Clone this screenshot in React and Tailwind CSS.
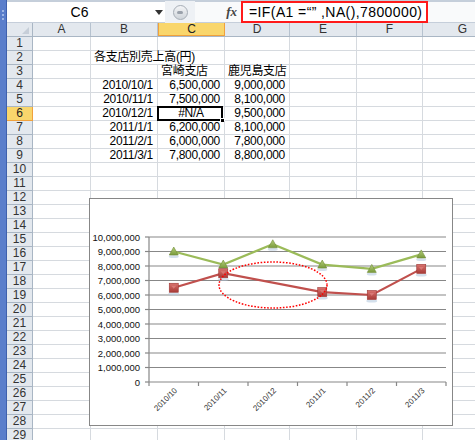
import React from 'react'

const FONT = { fontFamily: '"Liberation Sans", "Noto Sans CJK JP", sans-serif' }

const COLS = [
  { k: 'A', w: 'w-[58px]' },
  { k: 'B', w: 'w-[67px]' },
  { k: 'C', w: 'w-[67px]' },
  { k: 'D', w: 'w-[65px]' },
  { k: 'E', w: 'w-[67px]' },
  { k: 'F', w: 'w-[66px]' },
  { k: 'G', w: 'w-[80px]' },
]

// 表のデータ（行番号 -> 列 -> 値）
const CELLS = {
  2: { B: { v: '各支店別売上高(円)', align: 'left', spill: true } },
  3: { C: { v: '宮崎支店', align: 'left' }, D: { v: '鹿児島支店', align: 'left' } },
  4: { B: { v: '2010/10/1' }, C: { v: '6,500,000' }, D: { v: '9,000,000' } },
  5: { B: { v: '2010/11/1' }, C: { v: '7,500,000' }, D: { v: '8,100,000' } },
  6: { B: { v: '2010/12/1' }, C: { v: '#N/A', align: 'center', active: true }, D: { v: '9,500,000' } },
  7: { B: { v: '2011/1/1' }, C: { v: '6,200,000' }, D: { v: '8,100,000' } },
  8: { B: { v: '2011/2/1' }, C: { v: '6,000,000' }, D: { v: '7,800,000' } },
  9: { B: { v: '2011/3/1' }, C: { v: '7,800,000' }, D: { v: '8,800,000' } },
}

const ROWS = Array.from({ length: 29 }, (_, i) => i + 1)

export default function App() {
  return (
    <div className="relative w-[475px] h-[440px] overflow-hidden bg-white flex" style={FONT}>
      {/* 左端の青い帯 */}
      <div className="w-[7px] shrink-0 bg-[#5a7ecb] border-r border-[#3e60ad] flex flex-col items-center pt-[10px] gap-[2px]">
        <span className="w-[2px] h-[2px] bg-[#9fb7e6]" />
        <span className="w-[2px] h-[2px] bg-[#9fb7e6]" />
        <span className="w-[2px] h-[2px] bg-[#9fb7e6]" />
      </div>

      <div className="flex-1 flex flex-col min-w-0">
        {/* 上端のツールバーの縁 */}
        <div className="h-[6px] bg-[#e2e8ef] border-b border-[#c5cfdb] flex">
          <div className="w-[87px] border-r border-[#b9c4d2]" />
          <div className="w-[278px] border-r border-[#b9c4d2]" />
          <div className="w-[90px] border-r border-[#b9c4d2]" />
        </div>

        {/* 数式バー */}
        <FormulaBar />
        <div className="h-[3px] bg-[#dfe5ec]" />

        {/* 列見出し */}
        <div className="flex h-[14px] bg-[#e3e8ee] border-b border-[#a9b6c4]">
          <div className="w-[26px] shrink-0 border-r border-[#a9b6c4] relative">
            <span className="absolute right-[3px] bottom-[2px] w-0 h-0 border-l-[7px] border-l-transparent border-b-[7px] border-b-[#c6ced8]" />
          </div>
          {COLS.map((c) => (
            <div
              key={c.k}
              className={`${c.w} shrink-0 border-r text-center text-[12px] leading-[13px] ${
                c.k === 'C'
                  ? 'bg-[#f9d66c] border-[#f0a13c] border-l border-b text-[#222]'
                  : 'border-[#b6c2cf] text-[#333]'
              }`}
            >
              {c.k}
            </div>
          ))}
        </div>

        {/* セル */}
        {ROWS.map((r) => (
          <div key={r} className="flex h-[14px] shrink-0">
            <div
              className={`w-[26px] shrink-0 border-r border-b text-center text-[12px] leading-[13px] ${
                r === 6
                  ? 'bg-[#f9d66c] border-[#f0a13c] text-[#222]'
                  : 'bg-[#e3e8ee] border-[#a9b6c4] text-[#333]'
              }`}
            >
              {r}
            </div>
            {COLS.map((c) => {
              const cell = CELLS[r] && CELLS[r][c.k]
              return <Cell key={c.k} w={c.w} cell={cell} />
            })}
          </div>
        ))}
      </div>

      <Chart />
    </div>
  )
}

function FormulaBar() {
  return (
    <div className="h-[22px] flex items-stretch bg-[#eef1f5]">
      <div className="w-[158px] flex items-center bg-white border-y border-[#c5ceda]">
        <div className="w-[145px] text-center text-[14px] leading-none">C6</div>
        <div className="w-0 h-0 border-x-[4px] border-x-transparent border-t-[5px] border-t-[#333] ml-[3px]" />
      </div>
      <div className="w-[30px] flex items-center justify-center">
        <div className="w-[15px] h-[15px] rounded-full bg-gradient-to-b from-[#f4f5f7] to-[#cfd4da] border border-[#a6adb6] flex items-center justify-center">
          <span className="w-[6px] h-[3px] rounded-sm bg-[#9aa1ab]" />
        </div>
      </div>
      <div className="flex-1 flex items-center bg-[#f9fafb] border-y border-[#c5ceda]">
        <span
          className="w-[46px] text-right pr-[4px] text-[13px] italic font-bold text-[#444]"
          style={{ fontFamily: '"Liberation Serif", serif' }}
        >
          fx
        </span>
        <div className="w-[187px] h-[22px] border-2 border-[#ff1a1a] bg-white flex items-center pl-[6px] text-[14px] leading-none whitespace-nowrap tracking-[0.4px]">
          =IF(A1 =&ldquo;&rdquo; ,NA(),7800000)
        </div>
      </div>
    </div>
  )
}

function Cell({ w, cell }) {
  if (!cell) {
    return <div className={`${w} shrink-0 border-r border-b border-[#d6dadf]`} />
  }
  const align =
    cell.align === 'left'
      ? 'justify-start pl-[3px]'
      : cell.align === 'center'
      ? 'justify-center'
      : 'justify-end pr-[4px]'
  return (
    <div
      className={`${w} shrink-0 relative flex items-center border-b border-[#d6dadf] whitespace-nowrap text-[12px] leading-[13px] text-black ${align} ${
        cell.spill ? 'overflow-visible z-[1]' : 'border-r'
      }`}
    >
      <span className="tracking-[-0.3px]">{cell.v}</span>
      {cell.active && (
        <>
          <div className="absolute left-[-1px] top-[-1px] right-[1px] bottom-[-1px] border-2 border-black" />
          <div className="absolute right-[-1px] bottom-[-3px] w-[5px] h-[5px] bg-black border border-white" />
        </>
      )}
    </div>
  )
}

// グラフ（セルの上に浮かぶ）
const X0 = 149
const X1 = 446
const Y0 = 382
const STEP = 14.5
const CAT = (X1 - X0) / 6
const cx = (i) => X0 + CAT * (i + 0.5)
const cy = (v) => Y0 - v * STEP

const CATS = ['2010/10', '2010/11', '2010/12', '2011/1', '2011/2', '2011/3']
const MIYAZAKI = [6.5, 7.5, null, 6.2, 6.0, 7.8]
const KAGOSHIMA = [9.0, 8.1, 9.5, 8.1, 7.8, 8.8]
const YLABELS = ['0', '1,000,000', '2,000,000', '3,000,000', '4,000,000', '5,000,000', '6,000,000', '7,000,000', '8,000,000', '9,000,000', '10,000,000']

function Chart() {
  const red = MIYAZAKI.map((v, i) => (v == null ? null : [cx(i), cy(v)])).filter(Boolean)
  const green = KAGOSHIMA.map((v, i) => [cx(i), cy(v)])
  return (
    <div className="absolute left-[89px] top-[198px] w-[364px] h-[228px] bg-white border border-[#878787] z-[2]">
      <svg width="362" height="226" viewBox="90 199 362 226" className="block">
        <defs>
          <linearGradient id="gTri" x1="0" y1="0" x2="0" y2="1">
            <stop offset="0" stopColor="#b4cf7a" />
            <stop offset="1" stopColor="#7a9a3c" />
          </linearGradient>
          <linearGradient id="gSq" x1="0" y1="0" x2="0" y2="1">
            <stop offset="0" stopColor="#d9736f" />
            <stop offset="1" stopColor="#a83a36" />
          </linearGradient>
        </defs>

        {/* 目盛線 */}
        {YLABELS.map((t, i) => (
          <g key={t}>
            {i > 0 && <line x1={X0} x2={X1} y1={cy(i)} y2={cy(i)} stroke="#878787" strokeWidth="1.2" />}
            <line x1={X0 - 4} x2={X0} y1={cy(i)} y2={cy(i)} stroke="#878787" strokeWidth="1.2" />
            <text
              x={140}
              y={cy(i) + 3.5}
              textAnchor="end"
              fontSize="9.5"
              fill="#111"
              fontFamily="Liberation Sans, sans-serif"
            >
              {t}
            </text>
          </g>
        ))}
        <line x1={X0} x2={X0} y1={cy(10)} y2={Y0} stroke="#878787" strokeWidth="1.2" />
        <line x1={X0} x2={X1} y1={Y0} y2={Y0} stroke="#878787" strokeWidth="1.2" />
        {Array.from({ length: 7 }, (_, i) => (
          <line key={i} x1={X0 + CAT * i} x2={X0 + CAT * i} y1={Y0} y2={Y0 + 4} stroke="#878787" strokeWidth="1.2" />
        ))}
        {CATS.map((c, i) => (
          <text
            key={c}
            x={cx(i) + 4}
            y={391}
            textAnchor="end"
            fontSize="8"
            fill="#333"
            fontFamily="Liberation Sans, sans-serif"
            transform={`rotate(-45 ${cx(i) + 4} 391)`}
          >
            {c}
          </text>
        ))}

        {/* 鹿児島支店 */}
        <polyline points={green.map((p) => p.join(',')).join(' ')} fill="none" stroke="#9bbb59" strokeWidth="2.2" />
        {green.map(([x, y], i) => (
          <g key={i}>
            <ellipse cx={x} cy={y + 5} rx="5" ry="1.5" fill="#b8cbe0" opacity="0.6" />
            <polygon
              points={`${x - 4.5},${y + 3.5} ${x + 4.5},${y + 3.5} ${x},${y - 4.5}`}
              fill="url(#gTri)"
              stroke="#6e8b35"
              strokeWidth="0.6"
            />
          </g>
        ))}

        {/* 宮崎支店 */}
        <polyline points={red.map((p) => p.join(',')).join(' ')} fill="none" stroke="#c0504d" strokeWidth="2.2" />
        {red.map(([x, y], i) => (
          <g key={i}>
            <ellipse cx={x} cy={y + 6} rx="5.5" ry="1.5" fill="#b8cbe0" opacity="0.6" />
            <rect x={x - 4.5} y={y - 4.5} width="9" height="9" fill="url(#gSq)" stroke="#9c3532" strokeWidth="0.6" />
            <polygon points={`${x - 2.5},${y - 2} ${x + 2.5},${y - 2} ${x},${y + 1}`} fill="#e48b87" opacity="0.6" />
          </g>
        ))}

        {/* 赤い点線の楕円 */}
        <ellipse cx="273" cy="285" rx="54" ry="23" fill="none" stroke="#ff0000" strokeWidth="1.5" strokeDasharray="1.6 1.6" />
      </svg>
    </div>
  )
}
